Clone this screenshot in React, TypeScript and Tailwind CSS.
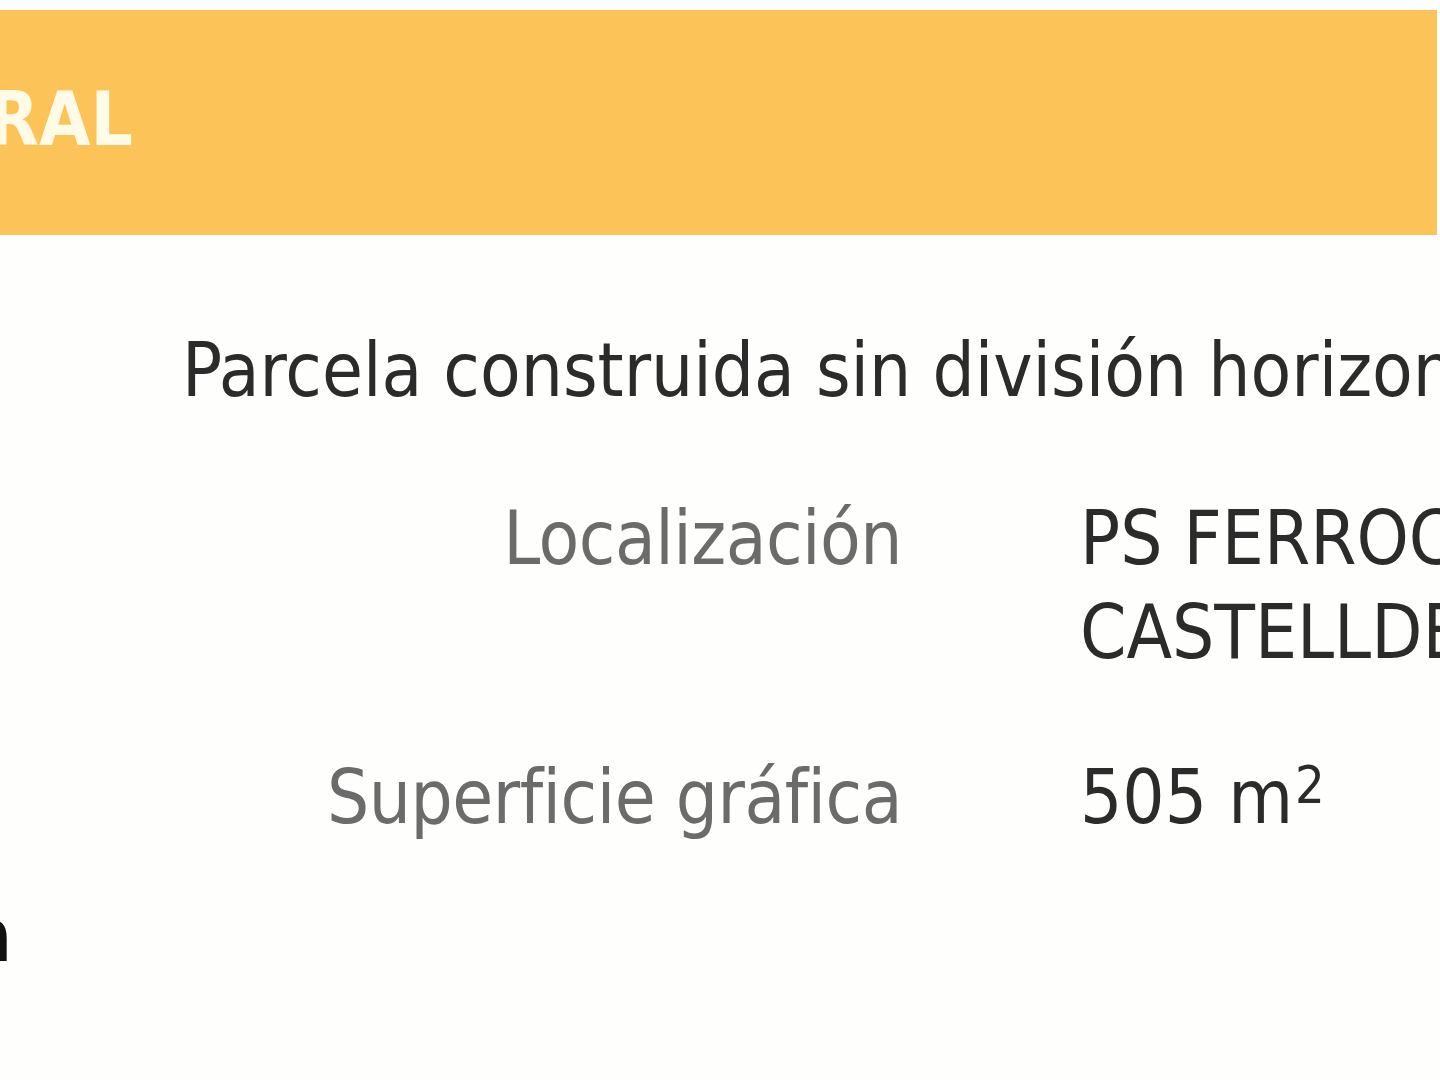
import React from 'react';

const font = { fontFamily: '"DejaVu Sans Condensed", "DejaVu Sans", Verdana, sans-serif' };

const rows: { label: string; value: React.ReactNode }[] = [
  {
    label: 'Localización',
    value: (
      <>
        <span className="block whitespace-nowrap">PS FERROCARRIL 21 08860</span>
        <span className="block whitespace-nowrap">CASTELLDEFELS (BARCELONA)</span>
      </>
    ),
  },
  {
    label: 'Superficie gráfica',
    value: (
      <span className="whitespace-nowrap">
        505 m<span className="inline-block align-top text-[52px] leading-[52px] ml-[2px] mt-[9px]">2</span>
      </span>
    ),
  },
];

export default function App() {
  return (
    <div className="w-[1440px] h-[1080px] overflow-hidden bg-[#fefefc] text-[74px] leading-[94px]" style={font}>
      {/* Cabecera de sección */}
      <div className="mt-[10px] mr-[3px] h-[225px] bg-[#fcc458] pt-[62px]">
        <div className="w-[133px] flex justify-end overflow-hidden">
          <span className="whitespace-nowrap font-bold text-[#fffbe6]">PARCELA CATASTRAL</span>
        </div>
      </div>

      <div className="pl-[182px] mt-[88px] text-[#2b2b2b] whitespace-nowrap">
        Parcela construida sin división horizontal
      </div>

      <div className="mt-[74px] grid grid-cols-[902px_1fr] gap-x-[178px] gap-y-[71px]">
        {rows.map(r => (
          <React.Fragment key={r.label}>
            <div className="text-right text-[#6b6b6b] whitespace-nowrap tracking-[-0.5px]">{r.label}</div>
            <div className="text-[#2b2b2b]">{r.value}</div>
          </React.Fragment>
        ))}
      </div>

      <div className="mt-[44px] w-[12px] flex justify-end overflow-hidden">
        <span className="whitespace-nowrap font-bold text-[#111]">Referencia</span>
      </div>
    </div>
  );
}
